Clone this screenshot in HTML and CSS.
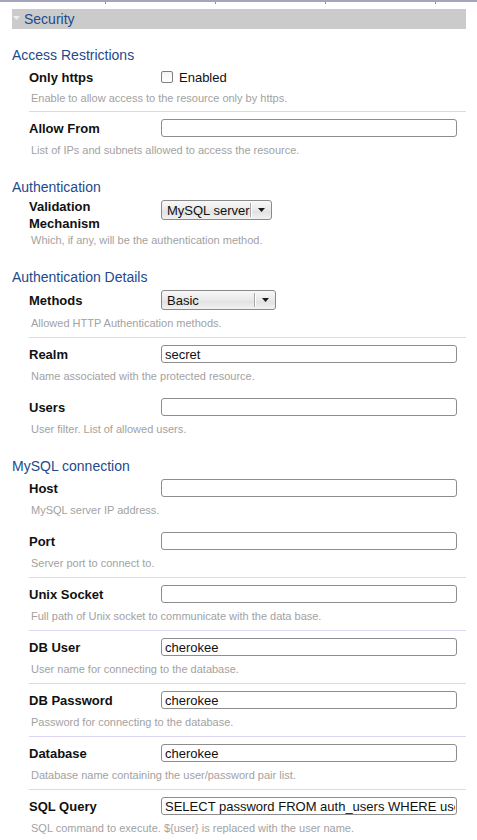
FILE: index.html
```html
<!DOCTYPE html>
<html>
<head>
<meta charset="utf-8">
<link rel="stylesheet" href="styles.css">
</head>
<body>
<div class="edge">
  <span class="edge-cell edge-first"></span>
  <span class="edge-cell"></span>
  <span class="edge-cell"></span>
  <span class="edge-cell"></span>
  <span class="edge-rest"></span>
</div>
<div class="page">
  <div class="bar">
    <svg class="bar-arrow" width="7" height="4" viewBox="0 0 7 4"><path d="M0 0H7L3.5 4Z" fill="#eeeeee"/></svg>
    <span class="bar-title">Security</span>
  </div>

  <section class="section section-first">
    <h2 class="section-title">Access Restrictions</h2>
    <div class="row first row-check">
      <div class="field">
        <span class="label">Only https</span>
        <label class="check"><input type="checkbox" class="checkbox"><span>Enabled</span></label>
      </div>
      <div class="desc">Enable to allow access to the resource only by https.</div>
    </div>
    <div class="row sep">
      <div class="field">
        <span class="label">Allow From</span>
        <input class="text" type="text" value="">
      </div>
      <div class="desc">List of IPs and subnets allowed to access the resource.</div>
    </div>
  </section>

  <section class="section">
    <h2 class="section-title">Authentication</h2>
    <div class="row first row-tall">
      <div class="field field-top">
        <span class="label label-two">Validation<br>Mechanism</span>
        <div class="combo combo-auth">
          <span class="combo-text">MySQL server</span>
          <span class="combo-div"></span>
          <span class="combo-btn"><svg width="7" height="4" viewBox="0 0 7 4"><path d="M0 0H7L3.5 4Z" fill="#1a1a1a"/></svg></span>
        </div>
      </div>
      <div class="desc">Which, if any, will be the authentication method.</div>
    </div>
  </section>

  <section class="section">
    <h2 class="section-title">Authentication Details</h2>
    <div class="row first">
      <div class="field">
        <span class="label">Methods</span>
        <div class="combo combo-methods">
          <span class="combo-text">Basic</span>
          <span class="combo-div"></span>
          <span class="combo-btn"><svg width="7" height="4" viewBox="0 0 7 4"><path d="M0 0H7L3.5 4Z" fill="#1a1a1a"/></svg></span>
        </div>
      </div>
      <div class="desc">Allowed HTTP Authentication methods.</div>
    </div>
    <div class="row sep">
      <div class="field">
        <span class="label">Realm</span>
        <input class="text" type="text" value="secret">
      </div>
      <div class="desc">Name associated with the protected resource.</div>
    </div>
    <div class="row">
      <div class="field">
        <span class="label">Users</span>
        <input class="text" type="text" value="">
      </div>
      <div class="desc">User filter. List of allowed users.</div>
    </div>
  </section>

  <section class="section">
    <h2 class="section-title">MySQL connection</h2>
    <div class="row first">
      <div class="field">
        <span class="label">Host</span>
        <input class="text" type="text" value="">
      </div>
      <div class="desc">MySQL server IP address.</div>
    </div>
    <div class="row">
      <div class="field">
        <span class="label">Port</span>
        <input class="text" type="text" value="">
      </div>
      <div class="desc">Server port to connect to.</div>
    </div>
    <div class="row sep">
      <div class="field">
        <span class="label">Unix Socket</span>
        <input class="text" type="text" value="">
      </div>
      <div class="desc">Full path of Unix socket to communicate with the data base.</div>
    </div>
    <div class="row sep">
      <div class="field">
        <span class="label">DB User</span>
        <input class="text" type="text" value="cherokee">
      </div>
      <div class="desc">User name for connecting to the database.</div>
    </div>
    <div class="row sep">
      <div class="field">
        <span class="label">DB Password</span>
        <input class="text" type="text" value="cherokee">
      </div>
      <div class="desc">Password for connecting to the database.</div>
    </div>
    <div class="row sep">
      <div class="field">
        <span class="label">Database</span>
        <input class="text" type="text" value="cherokee">
      </div>
      <div class="desc">Database name containing the user/password pair list.</div>
    </div>
    <div class="row sep">
      <div class="field">
        <span class="label">SQL Query</span>
        <input class="text" type="text" value="SELECT password FROM auth_users WHERE username = '${user}'">
      </div>
      <div class="desc">SQL command to execute. ${user} is replaced with the user name.</div>
    </div>
  </section>
</div>
</body>
</html>
```

FILE: styles.css
```css
html, body {
  margin: 0;
  padding: 0;
  background: #ffffff;
}

body {
  font-family: "Liberation Sans", Arial, sans-serif;
  color: #111111;
  width: 477px;
  overflow: hidden;
}

.edge {
  display: flex;
  border-top: 2px solid #a3a5ba;
}

.edge-cell {
  flex: none;
  width: 109px;
  height: 2px;
  border-right: 1px solid #8a8ca2;
}

.edge-first {
  width: 105px;
}

.edge-rest {
  flex: 1;
}

.page {
  padding: 0 11px 0 12px;
}

.bar {
  margin-top: 5px;
  height: 20px;
  background: #cbcbcb;
  display: flex;
  align-items: center;
}

.bar-arrow {
  flex: none;
  margin-left: 1px;
  margin-top: -3px;
}

.bar-title {
  margin-left: 4px;
  font-size: 14px;
  line-height: 18px;
  color: #224a8c;
}

.section {
  margin-top: 14px;
}

.section-first {
  margin-top: 17px;
}

.section-title {
  margin: 0;
  font-size: 14px;
  line-height: 18px;
  font-weight: normal;
  color: #224a8c;
}

.row {
  margin-left: 17px;
  border-top: 1px solid transparent;
  padding: 7px 0 7px;
}

.row.sep {
  border-top-color: #ddd7f5;
}

.row.first {
  border-top: 0;
  padding-top: 4px;
}

.row-check {
  padding-bottom: 6px;
}

.row-check .desc {
  margin-top: 5px;
}

.row-tall .desc {
  margin-top: 1px;
}

.field {
  display: flex;
  align-items: center;
  min-height: 18px;
}

.field-top {
  align-items: flex-start;
}

.label {
  flex: none;
  width: 132px;
  font-size: 13px;
  line-height: 17px;
  font-weight: bold;
  color: #111111;
}

.label-two {
  margin-top: -2px;
}

.desc {
  margin-top: 6px;
  padding-left: 2px;
  font-size: 11px;
  line-height: 14px;
  color: #a2a2a2;
}

.text {
  box-sizing: border-box;
  width: 296px;
  height: 18px;
  margin: 0;
  padding: 0 1px 0 3px;
  border: 1px solid #8d8d8d;
  border-radius: 3px;
  background: #ffffff;
  font-family: "Liberation Sans", Arial, sans-serif;
  font-size: 13px;
  color: #111111;
  outline: none;
}

.check {
  display: flex;
  align-items: center;
  font-size: 13px;
  line-height: 17px;
  color: #111111;
}

.checkbox {
  -webkit-appearance: none;
  appearance: none;
  box-sizing: border-box;
  width: 12px;
  height: 12px;
  margin: 0 6px 0 0;
  border: 1px solid #7e7e7e;
  border-radius: 2px;
  background: linear-gradient(#f4f4f4, #ffffff);
}

.combo {
  box-sizing: border-box;
  height: 20px;
  display: flex;
  align-items: center;
  border: 1px solid #8a8a8a;
  border-radius: 3px;
  background: linear-gradient(#f8f8f8, #e9e9e9 50%, #e2e2e2 60%, #f2f2f2);
  font-size: 13px;
  color: #111111;
}

.combo-auth {
  width: 111px;
}

.combo-methods {
  width: 115px;
}

.combo-text {
  flex: 1;
  padding-left: 5px;
  white-space: nowrap;
}

.combo-div {
  flex: none;
  width: 1px;
  height: 14px;
  background: #a8a8a8;
  border-right: 1px solid #ffffff;
}

.combo-btn {
  flex: none;
  width: 19px;
  display: flex;
  justify-content: center;
  align-items: center;
}
```
